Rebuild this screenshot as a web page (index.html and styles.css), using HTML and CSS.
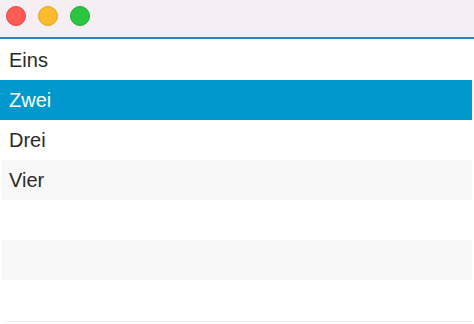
FILE: index.html
```html
<!DOCTYPE html>
<html>
<head>
<meta charset="utf-8">
<link rel="stylesheet" href="styles.css">
</head>
<body>
<div class="window">
  <div class="titlebar">
    <span class="light red"></span>
    <span class="light yellow"></span>
    <span class="light green"></span>
  </div>
  <div class="list">
    <div class="row">Eins</div>
    <div class="row selected">Zwei</div>
    <div class="row">Drei</div>
    <div class="row alt">Vier</div>
    <div class="row"></div>
    <div class="row alt"></div>
    <div class="row"></div>
  </div>
  <div class="bottomline"></div>
</div>
</body>
</html>
```
FILE: styles.css
```css
html, body {
  margin: 0;
  padding: 0;
  background: #ffffff;
}
.window {
  width: 474px;
  height: 324px;
  display: flex;
  flex-direction: column;
  font-family: "Liberation Sans", Arial, sans-serif;
}
.titlebar {
  height: 39px;
  background: #f5eff3;
  border-bottom: 2px solid #2a86c0;
  display: flex;
  align-items: center;
  gap: 12px;
  padding: 0 0 5px 6px;
  box-sizing: border-box;
}
.light {
  width: 20px;
  height: 20px;
  border-radius: 50%;
  box-sizing: border-box;
}
.red { background: #fd5c55; border: 1px solid #e4483f; }
.yellow { background: #fdbb2d; border: 1px solid #e1a325; }
.green { background: #2ac640; border: 1px solid #20ab34; }
.list {
  display: flex;
  flex-direction: column;
  padding: 1px 2px 0 2px;
}
.row {
  height: 40px;
  display: flex;
  align-items: center;
  padding-left: 7px;
  font-size: 20px;
  color: #2a2a2a;
}
.row.alt { background: #f8f8f8; }
.row.selected {
  background: #0098cd;
  color: #ffffff;
  margin: 0 0 0 -2px;
  padding-left: 9px;
}
.bottomline {
  height: 1px;
  margin: 1px 2px 0 6px;
  background: #eeeeee;
}
```
